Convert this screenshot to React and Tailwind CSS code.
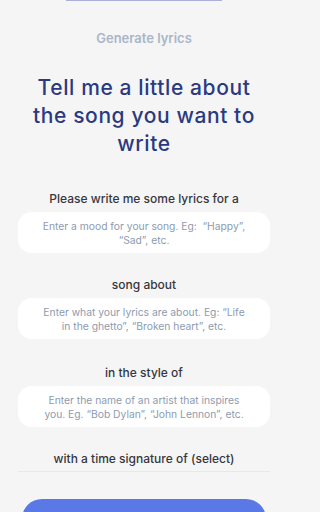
import React from "react";

const font = { fontFamily: "Inter, 'Noto Sans', sans-serif" };

function Field({ children }) {
  return (
    <div className="flex h-[41px] w-full items-center justify-center rounded-[14px] bg-white px-5 text-center text-[10.3px] leading-[14px] text-[#8d9bb0]">
      <p>{children}</p>
    </div>
  );
}

export default function App() {
  return (
    <div className="h-[512px] w-full overflow-hidden bg-[#f5f5f5]" style={font}>
      <div className="w-[288px]">
        <div className="flex h-[1px] w-full justify-center">
          <div className="h-[1px] w-[156px] bg-[#aab0d6]" />
        </div>
        <div className="px-[18px]">
          <div className="mt-[28px] text-center text-[13px] font-semibold leading-[18px] text-[#aab6c8]">
            Generate lyrics
          </div>
          <h1 className="mx-auto mt-[27px] w-[236px] text-center text-[21px] font-medium leading-[28px] tracking-[0.6px] text-[#2b3a80]">
            Tell me a little about the song you want to write
          </h1>
          <div className="mt-[33px] flex flex-col items-center">
            <div className="text-[12px] font-medium leading-[16px] text-[#35373f]">
              Please write me some lyrics for a
            </div>
            <div className="mt-[5px] w-full">
              <Field>
                Enter a mood for your song. Eg:&nbsp; “Happy”,
                <br />
                “Sad”, etc.
              </Field>
            </div>
            <div className="mt-[24px] text-[12px] font-medium leading-[16px] text-[#35373f]">
              song about
            </div>
            <div className="mt-[5px] w-full">
              <Field>
                Enter what your lyrics are about. Eg: “Life
                <br />
                in the ghetto”, “Broken heart”, etc.
              </Field>
            </div>
            <div className="mt-[26px] text-[12px] font-medium leading-[16px] text-[#35373f]">
              in the style of
            </div>
            <div className="mt-[5px] w-full">
              <Field>
                Enter the name of an artist that inspires
                <br />
                you. Eg. “Bob Dylan”, “John Lennon”, etc.
              </Field>
            </div>
            <div className="mt-[24px] w-full border-b border-[#e3e8f8] pb-[4px] text-center text-[12px] font-medium leading-[16px] text-[#35373f]">
              with a time signature of (select)
            </div>
          </div>
          <div className="mx-[4px] mt-[27px] h-[40px] rounded-t-[20px] bg-[#5a78e6]" />
        </div>
      </div>
    </div>
  );
}
